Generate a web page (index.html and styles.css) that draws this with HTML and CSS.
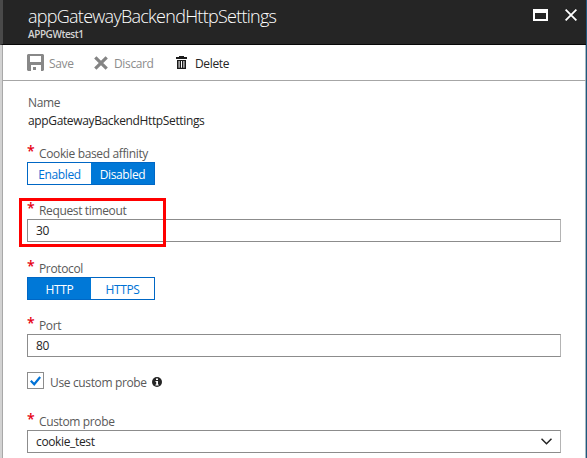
FILE: index.html
```html
<!DOCTYPE html>
<html lang="en">
<head>
<meta charset="utf-8">
<title>appGatewayBackendHttpSettings</title>
<link rel="stylesheet" href="styles.css">
</head>
<body>
<main class="blade">
  <header class="header">
    <div>
      <h1 class="title">appGatewayBackendHttpSettings</h1>
      <p class="subtitle">APPGWtest1</p>
    </div>
    <div class="window-actions">
      <svg width="15" height="12" viewBox="0 0 15 12"><path fill="#fff" fill-rule="evenodd" d="M0 0h15v12H0zM2 4v6h11V4z"/></svg>
      <svg width="12" height="12" viewBox="0 0 12 12"><path fill="none" stroke="#fff" stroke-width="1.8" d="M.6.6l10.8 10.8M11.4.6L.6 11.4"/></svg>
    </div>
  </header>
  <nav class="toolbar">
    <span class="command save"><svg width="17" height="17" viewBox="0 0 17 17"><path fill="#888" fill-rule="evenodd" d="M1 0h15l1 1v15l-1 1h-2v-6H4v6H1l-1-1V1zM3 2v6h11V2zM6 13h3v3H6z"/></svg><span>Save</span></span>
    <span class="command discard"><svg width="14" height="14" viewBox="0 0 14 14"><path fill="none" stroke="#848484" stroke-width="3.2" d="M1.3 1.3l11.4 11.4M12.7 1.3L1.3 12.7"/></svg><span>Discard</span></span>
    <span class="command delete"><svg width="11" height="13" viewBox="0 0 11 13"><path fill="#1b1b1b" fill-rule="evenodd" d="M3 0h5v1h3v2H0V1h3zM1 4h9v9H1zM2.6 5v6.7h1V5zM5 5v6.7h1V5zM7.4 5v6.7h1V5z"/></svg><span>Delete</span></span>
  </nav>
  <section class="form">
    <div class="name-label"><span>Name</span></div>
    <div class="name-value"><span>appGatewayBackendHttpSettings</span></div>
    <div class="field affinity">
      <div class="label"><b>*</b><span>Cookie based affinity</span></div>
      <div class="toggle"><span class="option">Enabled</span><span class="option selected">Disabled</span></div>
    </div>
    <div class="field timeout">
      <div class="label"><b>*</b><span>Request timeout</span></div>
      <div class="input">30</div>
      <div class="highlight"></div>
    </div>
    <div class="field protocol">
      <div class="label"><b>*</b><span>Protocol</span></div>
      <div class="toggle"><span class="option selected">HTTP</span><span class="option">HTTPS</span></div>
    </div>
    <div class="field port">
      <div class="label"><b>*</b><span>Port</span></div>
      <div class="input">80</div>
    </div>
    <div class="check-row">
      <span class="checkbox"><svg width="11" height="10" viewBox="0 0 11 10"><path fill="none" stroke="#0072d6" stroke-width="2.2" d="M.8 4.8l3.4 3.5L10.2 1"/></svg></span>
      <span class="check-text">Use custom probe</span>
      <svg class="info" width="10" height="10" viewBox="0 0 10 10"><circle cx="5" cy="5" r="5" fill="#252525"/><path fill="#fff" d="M4 1.5h2V3H4zM3.5 4H6v3.5h.7v1H3.4v-1h.8V5h-.7z"/></svg>
    </div>
    <div class="field probe">
      <div class="label"><b>*</b><span>Custom probe</span></div>
      <div class="input"><span>cookie_test</span><svg width="11" height="7" viewBox="0 0 11 7"><path fill="none" stroke="#222" stroke-width="1.5" d="M.5.7l5 5 5-5"/></svg></div>
    </div>
  </section>
</main>
</body>
</html>
```
FILE: styles.css
```css
* { box-sizing: border-box; }
body {
  margin: 0;
  height: 458px;
  overflow: hidden;
  background: #fff;
  color: #252525;
  font: 12px/16px "Open Sans", "Noto Sans", sans-serif;
  letter-spacing: -.36px;
}
svg { display: block; flex: none; }
.blade {
  height: 458px;
  border-left: 2px solid #d2d2d2;
  border-right: 1px solid #1f587d;
  box-shadow: inset 1px 0 #a8a8a8, inset -1px 0 #a8b8c2;
  padding-left: 1px;
}
.header {
  display: flex;
  justify-content: space-between;
  height: 45px;
  margin-left: -3px;
  padding: 5px 9px 0 25px;
  border-left: 3px solid #4a4a4a;
  border-bottom: 1px solid #080808;
  background: #252525;
  color: #fff;
}
.title {
  margin: 0;
  font-size: 18px;
  line-height: 22px;
  font-weight: 300;
  letter-spacing: -.73px;
}
.subtitle {
  margin: 1px 0 0;
  font-size: 10px;
  line-height: 12px;
  font-weight: 600;
  letter-spacing: -.43px;
  color: #d4d4d4;
}
.window-actions { display: flex; gap: 17px; padding-top: 4px; }
.toolbar {
  display: flex;
  height: 36px;
  padding-left: 24px;
  border-bottom: 1px solid #a6a6a6;
}
.command { display: flex; align-items: center; color: #8c8c8c; }
.command span { padding-top: 2px; }
.save { width: 67px; gap: 5px; }
.discard { width: 79px; gap: 6px; }
.delete { gap: 8px; padding-left: 3px; color: #252525; }
.form { padding: 14px 25px 0 24px; }
.name-label { height: 18px; padding-left: 1px; color: #595959; }
.name-value { height: 32px; padding-left: 1px; }
.field { position: relative; }
.label { display: flex; height: 17px; color: #595959; }
.label span { padding-top: 1px; }
.label b {
  width: 12px;
  font-size: 14px;
  font-weight: 600;
  line-height: 12px;
  color: #e60012;
}
.toggle {
  display: flex;
  width: 128px;
  height: 23px;
  border: 1px solid #0067c5;
}
.option {
  flex: 1;
  text-align: center;
  line-height: 23px;
  color: #0072d6;
}
.selected { background: #0078d7; color: #fff; }
.input {
  display: flex;
  align-items: center;
  justify-content: space-between;
  height: 23px;
  padding: 0 8px;
  border: 1px solid #8c8c8c;
  border-right-color: #b4b4b4;
}
.timeout { margin-top: 17px; }
.protocol { margin-top: 18px; }
.port { margin-top: 17px; }
.highlight {
  position: absolute;
  left: -8px;
  top: -4px;
  width: 147px;
  height: 49px;
  border: 3px solid #f00;
}
.check-row { display: flex; height: 17px; margin-top: 15px; }
.checkbox {
  display: grid;
  place-items: center;
  width: 17px;
  height: 17px;
  margin-right: 6px;
  border: 1px solid #8c8c8c;
}
.check-text { width: 98px; padding-top: 3px; color: #595959; white-space: nowrap; }
.info { margin: 5px 0 0 4px; }
.probe { margin-top: 24px; }
```
